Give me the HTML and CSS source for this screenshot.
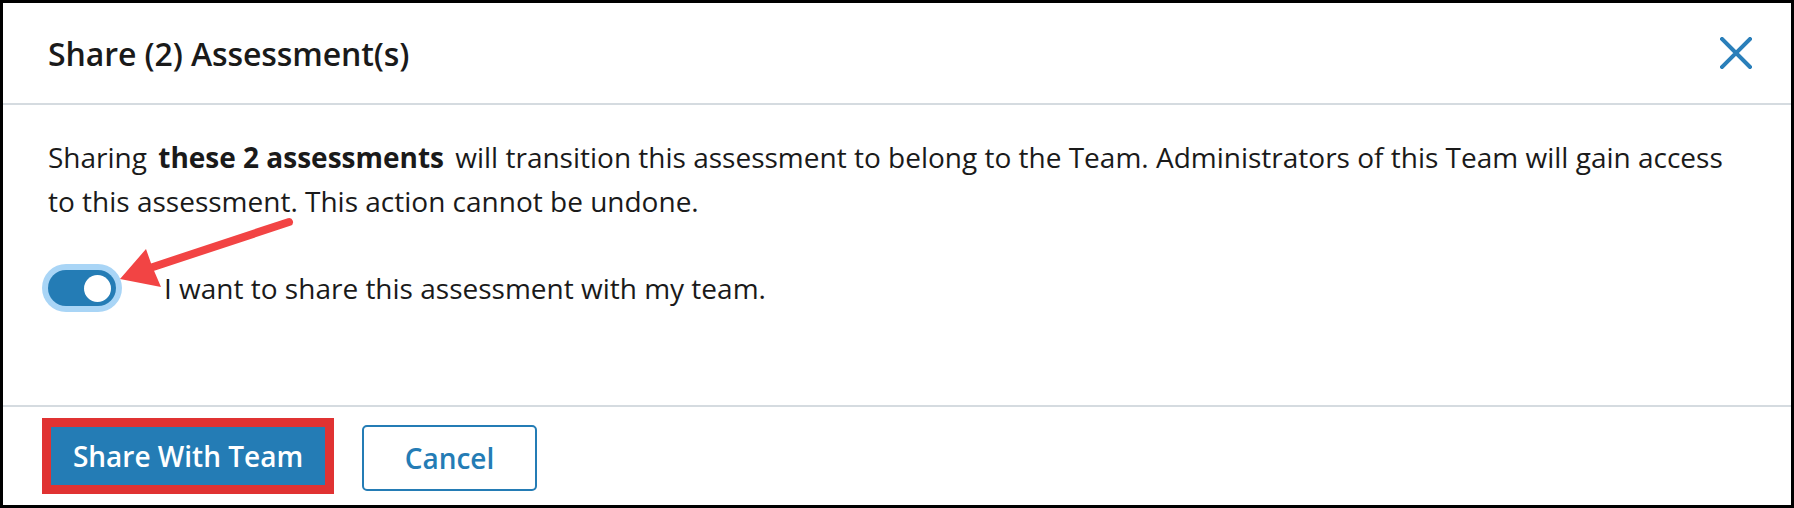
FILE: index.html
```html
<!DOCTYPE html>
<html lang="en">
<head>
<meta charset="utf-8">
<title>Share Assessments</title>
<link rel="stylesheet" href="styles.css">
</head>
<body>
<div class="dialog">
  <header class="header">
    <h1 class="title">Share (2) Assessment(s)</h1>
    <button class="close" aria-label="Close">
      <svg width="32" height="32" viewBox="0 0 32 32"><path d="M2 2 L30 30 M30 2 L2 30" stroke="#2a7fba" stroke-width="4" stroke-linecap="square" fill="none"/></svg>
    </button>
  </header>
  <section class="body">
    <p class="message">Sharing <strong class="em">these 2 assessments</strong> will transition this assessment to belong to the Team. Administrators of this Team will gain access to this assessment. This action cannot be undone.</p>
    <div class="toggle-row">
      <span class="toggle"><span class="knob"></span></span>
      <span class="toggle-label">I want to share this assessment with my team.</span>
    </div>
  </section>
  <footer class="footer">
    <span class="highlight"><button class="btn btn-primary">Share With Team</button></span>
    <button class="btn btn-secondary">Cancel</button>
  </footer>
  <svg class="annotation" width="1794" height="508" viewBox="0 0 1794 508">
    <line x1="289" y1="222" x2="150" y2="268" stroke="#f24444" stroke-width="8" stroke-linecap="round"/>
    <polygon points="120,279 146,249 152,266 161,287" fill="#f24444"/>
  </svg>
</div>
</body>
</html>
```
FILE: styles.css
```css
* { box-sizing: border-box; }
html, body { margin: 0; padding: 0; background: #fff; }
body { font-family: "Open Sans", "Noto Sans", sans-serif; color: #1a1a1a; }

.dialog {
  position: relative;
  width: 1794px;
  height: 508px;
  border: 3px solid #000;
  display: flex;
  flex-direction: column;
  background: #fff;
}

.header {
  height: 102px;
  flex: none;
  display: flex;
  align-items: center;
  justify-content: space-between;
  padding: 0 39px 0 45px;
  border-bottom: 2px solid #d5dbe0;
}
.title {
  margin: 0;
  font-size: 32px;
  font-weight: 600;
  letter-spacing: -0.1px;
  color: #1a1a1a;
}
.close {
  border: 0;
  background: none;
  padding: 0;
  width: 32px;
  height: 32px;
  display: flex;
}

.body {
  flex: 1;
  padding: 30px 48px 0 45px;
}
.message {
  margin: 0;
  font-size: 28px;
  line-height: 44px;
  color: #1a1a1a;
}
.em { font-weight: 700; padding: 0 4px; }

.toggle-row {
  margin-top: 46px;
  display: flex;
  align-items: center;
  gap: 48px;
}
.toggle {
  width: 68px;
  height: 36px;
  flex: none;
  border-radius: 18px;
  background: #247cb5;
  box-shadow: 0 0 0 6px #a9d5f6;
  display: flex;
  align-items: center;
  justify-content: flex-end;
  padding-right: 5px;
}
.knob {
  width: 27px;
  height: 27px;
  border-radius: 50%;
  background: #fff;
}
.toggle-label {
  font-size: 28px;
  color: #1a1a1a;
}

.footer {
  height: 100px;
  flex: none;
  border-top: 2px solid #d5dbe0;
  display: flex;
  align-items: flex-start;
  gap: 28px;
  padding: 11px 0 0 39px;
}
.highlight {
  display: flex;
  border: 9px solid #e03232;
}
.btn {
  font-family: "Open Sans", "Noto Sans", sans-serif;
  font-size: 28px;
  font-weight: 600;
  border-radius: 5px;
  cursor: pointer;
}
.btn-primary {
  width: 274px;
  height: 58px;
  background: #247cb5;
  color: #fff;
  border: 0;
  border-radius: 0;
}
.btn-secondary {
  margin-top: 7px;
  width: 175px;
  height: 66px;
  background: #fff;
  color: #247cb5;
  border: 2px solid #247cb5;
}

.annotation {
  position: absolute;
  left: -3px;
  top: -3px;
  pointer-events: none;
}
```
